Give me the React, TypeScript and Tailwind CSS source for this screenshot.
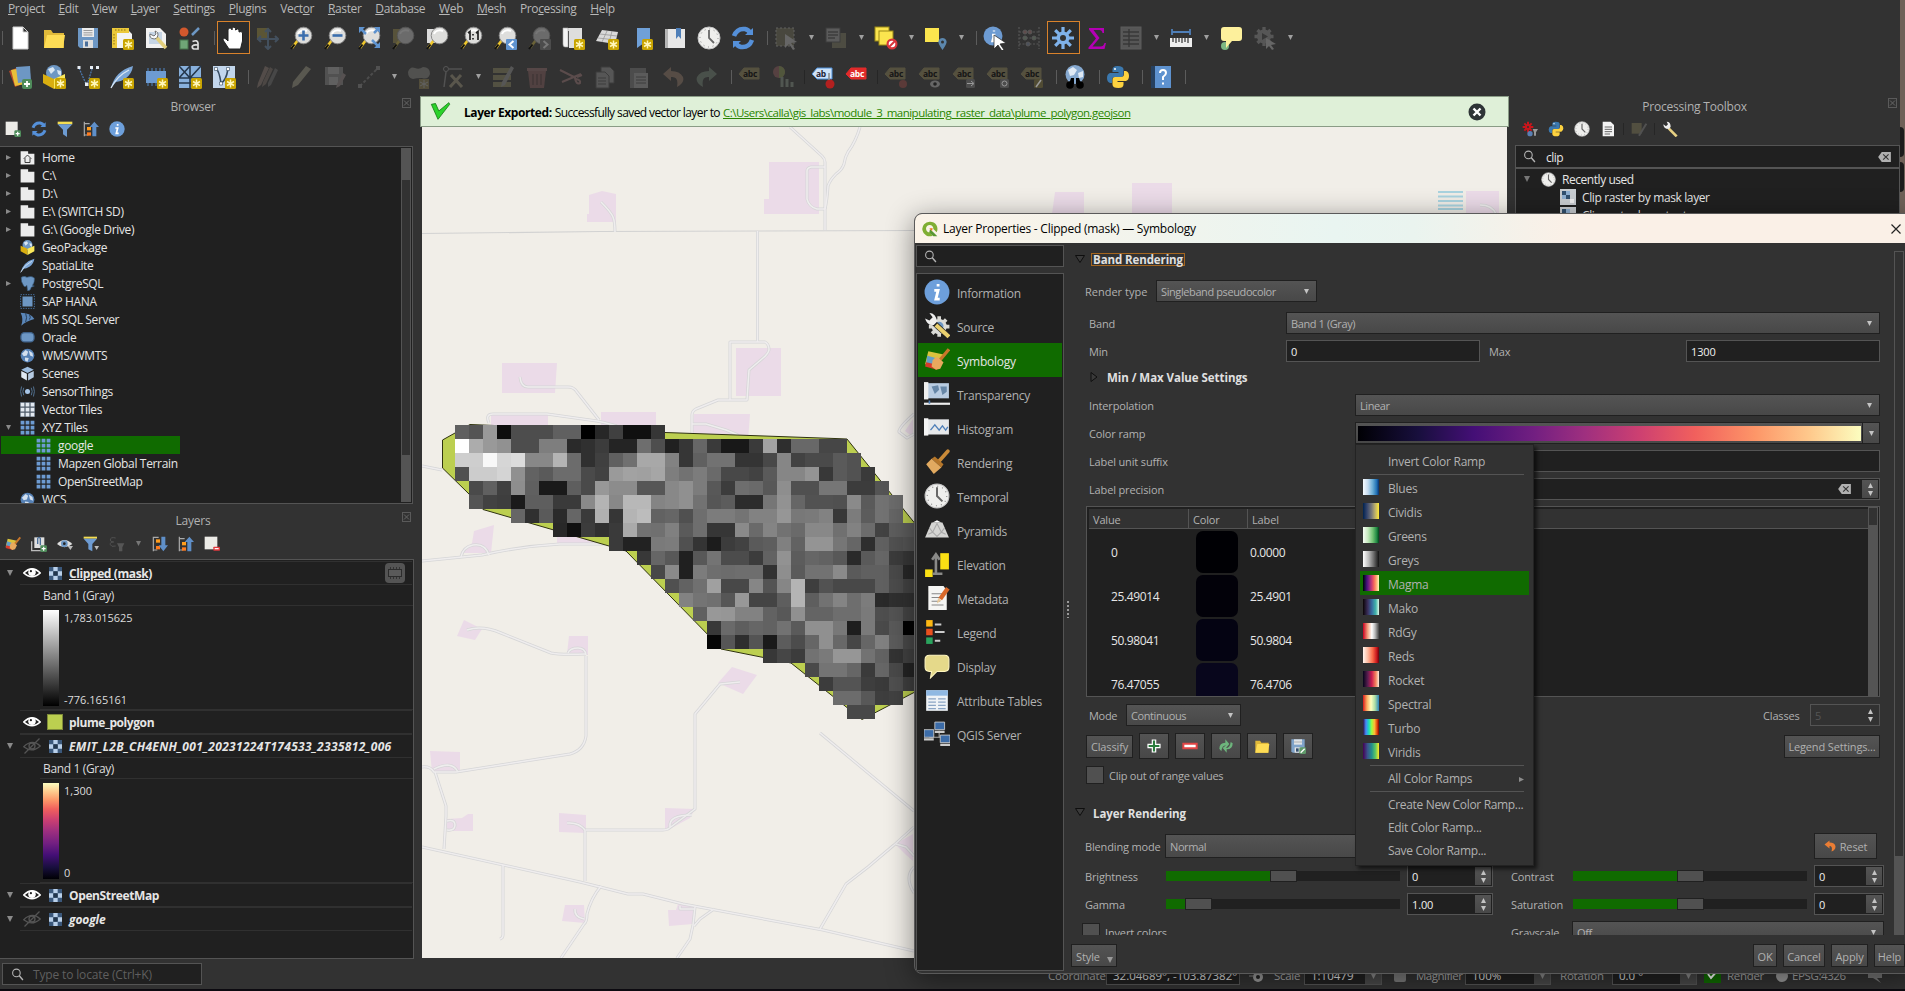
import React from "react";

type Kids = { children?: React.ReactNode };

/* ------------------------------------------------------------------ */
/* Icons                                                               */
/* ------------------------------------------------------------------ */

const Svg = ({ s = 24, children, dim }: { s?: number; dim?: boolean } & Kids) => (
  <svg width={s} height={s} viewBox="0 0 24 24" className={dim ? "block shrink-0 opacity-30" : "block shrink-0"}>
    {children}
  </svg>
);

const Star = () => (
  <g>
    <rect x="13" y="13" width="11" height="11" rx="1.5" fill="#c9a400" />
    <path d="M18.500 14.500v8M15 16.500l7 4M22 16.500l-7 4" stroke="#fff6b8" strokeWidth="1.500" />
  </g>
);
const PlusBadge = () => (
  <g>
    <rect x="14" y="14" width="10" height="10" rx="2" fill="#4f8c5b" />
    <path d="M19 16v6M16 19h6" stroke="#fff" strokeWidth="1.800" />
  </g>
);
const Lens = ({ dark }: { dark?: boolean }) => (
  <g>
    <path d="M9 14L3 22" stroke={dark ? "#6b6338" : "#f0c82c"} strokeWidth="2.600" />
    <path d="M5.500 18.500L2 23" stroke="#111" strokeWidth="2" />
    <circle cx="14.500" cy="9.500" r="8.300" fill={dark ? "#6b6b6b" : "#dededc"} stroke={dark ? "#555" : "#8a8a8a"} />
    <path d="M9 8a6 5 0 0 1 9-3" stroke={dark ? "#777" : "#fff"} strokeWidth="2" fill="none" />
  </g>
);
const Glyph: Record<string, React.ReactNode> = {
  new: <path d="M5 1h10l5 5v17H5z M15 1v5h5" fill="#fff" stroke="#cfcfcf" />,
  open: (
    <g>
      <path d="M2 4h7l2 3h11v15H2z" fill="#e0b93a" />
      <path d="M2 22L5 9h18l-2 13z" fill="#fddc55" />
    </g>
  ),
  save: (
    <g>
      <path d="M2 2h20v20H4l-2-2z" fill="#6d97c4" />
      <path d="M6 2h12v9H6z" fill="#ececec" />
      <path d="M7.500 4.500h9M7.500 6.800h9M7.500 9h9" stroke="#9a9a9a" />
      <path d="M7 14h10v8H7z" fill="#dedede" />
      <path d="M9 15.500h3v5H9z" fill="#4b6f9a" />
    </g>
  ),
  layout: (
    <g>
      <path d="M2 2h14l6 6v14H2z" fill="#f3f3f3" />
      <path d="M2 2h17v5H7v15H2z" fill="#ecc93b" />
      <path d="M5 4h12M4 8v12" stroke="#8c7412" strokeDasharray="1.500 1.500" />
      <Star />
    </g>
  ),
  layoutMgr: (
    <g>
      <path d="M2 2h14l6 6v14H2z" fill="#f1f1f1" />
      <path d="M5 6h13v12H5z" fill="#c6d5e5" />
      <path d="M12 11l10 11" stroke="#e3cf7c" strokeWidth="3.500" />
      <path d="M6 8a4 4 0 1 0 5-3l1 3-2 2z" fill="#fafafa" stroke="#555" strokeWidth=".8" />
    </g>
  ),
  style: (
    <g>
      <circle cx="6" cy="6" r="4.500" fill="#d2582d" />
      <path d="M14 9L21 2" stroke="#6d97c4" strokeWidth="2.500" />
      <rect x="2" y="14" width="8" height="9" fill="#6fa577" stroke="#46724d" />
      <path d="M14.500 15.500q5-2 5.500 1.500v6h-4q-2.500-1-1.500-3 1.500-1.500 5-1" stroke="#ddd" strokeWidth="1.700" fill="none" />
    </g>
  ),
  hand: (
    <path
      d="M8 23l-6-9q0-3 3-1l2 2V4q0-2 2-2t2 2V2.500q2-3 3.500 0V4q2-2 3.500 0v2q2.500-1.500 3.500 1v8l-2 8z"
      fill="#fff"
      stroke="#222"
    />
  ),
  panSel: (
    <g>
      <rect x="2" y="2" width="12" height="12" fill="#b9a83f" />
      <path d="M13 3v20M3 13h20M10 6l3-3 3 3M10 20l3 3 3-3M6 10l-3 3 3 3M20 10l3 3-3 3" stroke="#6d97c4" strokeWidth="2" fill="none" />
    </g>
  ),
  zin: (
    <g>
      <Lens />
      <path d="M14.500 4.500v10M9.500 9.500h10" stroke="#3c6fae" strokeWidth="2.600" />
    </g>
  ),
  zout: (
    <g>
      <Lens />
      <path d="M9.500 9.500h10" stroke="#3c6fae" strokeWidth="2.600" />
    </g>
  ),
  zfull: (
    <g>
      <Lens />
      <path d="M2 1h6L2 7zM23 1h-6l6 6zM23 22h-6l6-6z" fill="#5f93cf" />
      <path d="M3 2l6 6M22 2l-5 5M22 21l-7-7" stroke="#5f93cf" strokeWidth="2.500" />
    </g>
  ),
  zsel: (
    <g>
      <rect x="2" y="3" width="12" height="14" fill="#57523a" />
      <Lens dark />
    </g>
  ),
  zlayer: (
    <g>
      <rect x="2" y="3" width="12" height="14" fill="#dcdcdc" />
      <Lens />
    </g>
  ),
  z11: (
    <g>
      <Lens />
      <path d="M9 7l2-1.500V14M17 7l2-1.500V14M14 8v1.500M14 12v1.500" stroke="#222" strokeWidth="1.700" fill="none" />
    </g>
  ),
  zlast: (
    <g>
      <Lens />
      <rect x="13" y="13" width="11" height="11" rx="1" fill="#5f93cf" />
      <path d="M20.500 15l-4 3.500 4 3.500" stroke="#fff" strokeWidth="2" fill="none" />
    </g>
  ),
  znext: (
    <g>
      <Lens dark />
      <rect x="13" y="13" width="11" height="11" rx="1" fill="#4c4c4c" />
      <path d="M16.500 15l4 3.500-4 3.500" stroke="#777" strokeWidth="2" fill="none" />
    </g>
  ),
  mapview: (
    <g>
      <path d="M4 2h17v20H8V5H4z" fill="#dedede" />
      <path d="M2 2h5v19H4q-2 0-2-3z" fill="#f4f4f4" stroke="#aaa" strokeWidth=".6" />
      <Star />
    </g>
  ),
  view3d: (
    <g>
      <path d="M7 4l16 2-3 12L1 15z" fill="#d9d9d9" />
      <path d="M12 5L7 16M17 5l-3 12M5 8l17 2M3 12l18 2" stroke="#999" strokeWidth=".8" />
      <Star />
    </g>
  ),
  bookmark: (
    <g>
      <path d="M8 2h13v20l-6-5-7 5z" fill="#6fa0d8" />
      <Star />
    </g>
  ),
  book: (
    <g>
      <path d="M2 3h20v19H2z" fill="#e7e7e7" />
      <path d="M2 3h3v19H2z" fill="#b5b5b5" />
      <path d="M13 2h5v11l-2.500-3-2.500 3z" fill="#4f7fb8" />
    </g>
  ),
  clock: (
    <g>
      <circle cx="12" cy="12" r="11" fill="#efefed" stroke="#c4c4c4" />
      <circle cx="12" cy="12" r="9" fill="none" stroke="#888" strokeDasharray="1 3.700" />
      <path d="M12 4v8l5 5" stroke="#666" strokeWidth="1.800" fill="none" />
    </g>
  ),
  refresh: (
    <g fill="none" stroke="#5590d9" strokeWidth="4.500">
      <path d="M3 10q3-8 11-7 4 1 5 4" />
      <path d="M21 14q-3 8-11 7-4-1-5-4" />
      <path d="M14 9h8V2zM10 15H2v7z" fill="#5590d9" stroke="none" />
    </g>
  ),
  select: (
    <g>
      <rect x="2" y="2" width="18" height="18" fill="#7d7a5c" stroke="#ccc" strokeDasharray="2 2" />
      <path d="M11 8l12 8-6 1 4 6-2 1-4-6-4 4z" fill="#ddd" />
    </g>
  ),
  selForm: (
    <g>
      <rect x="8" y="7" width="14" height="15" fill="#8c8868" />
      <rect x="2" y="2" width="14" height="14" fill="#bbb" stroke="#555" />
      <path d="M4 6h10M4 9h10M4 12h7" stroke="#555" strokeWidth="1.500" />
    </g>
  ),
  desel: (
    <g>
      <rect x="1" y="1" width="14" height="14" fill="#fbe54e" stroke="#998717" />
      <rect x="5" y="5" width="14" height="14" fill="#fbe54e" stroke="#998717" />
      <circle cx="18" cy="18" r="5.500" fill="#d8353b" />
      <circle cx="18" cy="18" r="3.300" fill="#fff" />
      <path d="M15 21l6-6" stroke="#d8353b" strokeWidth="2" />
    </g>
  ),
  selLoc: (
    <g>
      <rect x="1" y="2" width="14" height="14" fill="#fbe54e" />
      <path d="M18.500 24q-5-7-4-9 1-3 4-3t4 3q1 2-4 9z" fill="#5c87ad" />
      <circle cx="18.500" cy="16" r="1.500" fill="#333" />
    </g>
  ),
  identify: (
    <g>
      <circle cx="10" cy="10" r="9.500" fill="#6d9bd2" />
      <path d="M11 4.500v1M9 9h2l-1.500 6H12" stroke="#fff" strokeWidth="2.400" fill="none" />
      <path d="M11 9l12 8-6 1 4 6-2 1-4-6-4 4z" fill="#fff" stroke="#222" strokeWidth=".7" />
    </g>
  ),
  abacus: (
    <g stroke="#aaa" fill="#c88">
      <path d="M2 1v22M22 1v22M2 6h20M2 12h20M2 18h20" strokeWidth="1.200" strokeDasharray="2 1.500" />
      <circle cx="8" cy="6" r="2" /><circle cx="13" cy="6" r="2" />
      <circle cx="8" cy="12" r="2" fill="#9b9" /><circle cx="17" cy="12" r="2" fill="#9b9" />
      <circle cx="11" cy="18" r="2" fill="#89b" />
    </g>
  ),
  gear: (
    <g>
      <path d="M12 1v22M1 12h22M4.200 4.200l15.600 15.600M19.800 4.200L4.200 19.800" stroke="#7fb2ea" strokeWidth="3.200" />
      <circle cx="12" cy="12" r="6.500" fill="#7fb2ea" />
      <circle cx="12" cy="12" r="3" fill="#323232" />
    </g>
  ),
  sigma: <path d="M4 2h15v5h-1.500q-.5-3-3-3H8.500l6 8-7 8.500h8q3 0 4-3.500H21l-1.500 6H3.500v-1.500L11 12.500 4 3.500z" fill="#b400b4" />,
  table: (
    <g>
      <rect x="2" y="1" width="20" height="22" fill="#aaa" stroke="#bbb" />
      <path d="M4 6h16M4 10h16M4 14h16M4 18h16M10 3v18" stroke="#444" strokeWidth="1.400" />
    </g>
  ),
  ruler: (
    <g>
      <path d="M3 6h18M3 3v6M21 3v6" stroke="#4f7fb8" strokeWidth="1.800" />
      <rect x="1" y="12" width="22" height="9" fill="#eee" />
      <path d="M4 12v4M7 12v5M10 12v4M13 12v5M16 12v4M19 12v5" stroke="#333" strokeWidth="1.200" />
    </g>
  ),
  tip: (
    <g>
      <circle cx="6" cy="20" r="4" fill="#7db783" />
      <path d="M5 1h15q3 0 3 3v8q0 3-3 3h-7l-6 7V15H5q-3 0-3-3V4q0-3 3-3z" fill="#fdf09c" />
    </g>
  ),
  runAct: (
    <g>
      <path d="M11 1v19M1.500 10.500h19M4.500 4l13 13M17.500 4l-13 13" stroke="#aaa" strokeWidth="3.300" />
      <circle cx="11" cy="10.500" r="7" fill="#aaa" />
      <path d="M9 7l6 3.500-6 3.500z" fill="#444" />
      <path d="M13 12l10 6-5 1 3 4-2 1-3-4-3 3z" fill="#ddd" />
    </g>
  ),
  dsm: (
    <g>
      <path d="M1 6l10-4 6 16-10 4z" fill="#b5482c" />
      <path d="M3 5l11-2 3 16-10 2z" fill="#e8bf39" />
      <path d="M8 2l14-1 1 15-13 2z" fill="#6d97c4" />
      <PlusBadge />
    </g>
  ),
  gpkg: (
    <g>
      <circle cx="12" cy="8" r="8" fill="#6d97c4" />
      <path d="M6 4l5-2 2 3-4 4zM15 5l4 1v5l-3-2z" fill="#d8e6f3" />
      <path d="M1 9l11 5v10L1 18z" fill="#d9ae10" />
      <path d="M23 9l-11 5v10l11-6z" fill="#fae85a" />
    </g>
  ),
  shp: (
    <g>
      <path d="M3 3l7 16M12 17l4-13" stroke="#4f7fb8" strokeWidth="1.200" fill="none" strokeDasharray="2 1" />
      <path d="M1.500 1h3v3h-3zM9 17.500h3.500V21H9zM14 1h3v3h-3zM20 1h3v3h-3z" fill="#e8eef5" />
      <Star />
    </g>
  ),
  feather: (
    <g>
      <path d="M1 23Q5 6 23 1q-1 8-8 13-5 3-9 3z" fill="#7ca6d6" />
      <path d="M1 23Q7 11 19 5" stroke="#dbe8f5" strokeWidth="1.300" fill="none" />
    </g>
  ),
  chip: (
    <g>
      <path d="M4 3v18M8 3v18M12 3v18M16 3v18M20 3v18" stroke="#4b79ad" strokeWidth="1.200" />
      <rect x="2" y="6" width="20" height="12" fill="#6d9bd2" />
    </g>
  ),
  mesh: (
    <g>
      <rect x="1" y="1" width="22" height="22" fill="#88b0dc" />
      <path d="M1 13h22M12 1v22M1 1l11 12M12 1L1 13M12 13L23 1M1 18h22" stroke="#25374c" strokeWidth="1.600" fill="none" />
    </g>
  ),
  virt: (
    <g>
      <rect x="1" y="1" width="22" height="22" fill="#c2d6ec" />
      <path d="M4 4q3 1 5 14 5-2 7-14" stroke="#34495f" strokeWidth="1.600" fill="none" />
      <path d="M2.500 2.500h3v3h-3zM7.500 17h3v3h-3zM14.500 2.500h3v3h-3z" fill="#fff" stroke="#34495f" strokeWidth=".6" />
    </g>
  ),
  pencils: (
    <g>
      <path d="M10 1l4 2L6 20l-4 3 1-5z" fill="#a08a80" />
      <path d="M15 2l3 2-7 15-4 3 1-5z" fill="#8a7a70" />
      <path d="M20 3l3 2-7 15-3 2 0-4z" fill="#777" />
    </g>
  ),
  pencil: <path d="M17 1l5 3L9 20l-6 3 1-6z" fill="#b5b095" />,
  saveEd: (
    <g>
      <path d="M2 2h18v18H2z" fill="#999" />
      <path d="M5 2h11v7H5zM6 12h9v8H6z" fill="#ccc" />
      <path d="M20 8l3 2-6 11-4 2 1-4z" fill="#a99" />
    </g>
  ),
  digi: (
    <g fill="#999">
      <path d="M3 21L21 3" stroke="#888" strokeWidth="2" strokeDasharray="3 2" />
      <rect x="1" y="19" width="4" height="4" /><rect x="19" y="1" width="4" height="4" />
    </g>
  ),
  blob: (
    <g>
      <path d="M1 7q2-6 7-4 4 2 8-1 7 0 7 7-2 6-8 4-6 0-9 1-5-1-5-7z" fill="#9a9a94" />
      <rect x="12" y="14" width="10" height="10" fill="#9c8d50" />
      <path d="M17 15v8M13 17l8 4M21 17l-8 4" stroke="#ccc" />
    </g>
  ),
  vertex: (
    <g>
      <circle cx="5" cy="4" r="2.500" fill="none" stroke="#aaa" />
      <path d="M5 7L3 22M8 4h13" stroke="#999" strokeWidth="1.500" />
      <path d="M9 22l11-12M10 10l11 12" stroke="#b5aa8a" strokeWidth="3" />
    </g>
  ),
  modAttr: (
    <g>
      <path d="M2 3h18v5H2zM2 10h18v5H2zM2 17h18v5H2z" fill="#a09a68" />
      <path d="M20 1l3 2-9 17-4 2 1-5z" fill="#aaa" />
    </g>
  ),
  trash: (
    <g>
      <path d="M3 6h18l-2 17H5z" fill="#966" />
      <path d="M2 3h20v3H2z" fill="#a77" />
      <path d="M8 9v11M12 9v11M16 9v11" stroke="#644" strokeWidth="1.500" />
    </g>
  ),
  cut: <path d="M1 5l16 8M3 17L22 9M17 14q5 1 4 4-4 2-5-5M18 12l5-2" stroke="#b88" strokeWidth="2" fill="none" />,
  copy: (
    <g fill="#aaa" stroke="#555">
      <path d="M8 2h9l4 4v12H8z" /><path d="M3 7h9l4 4v12H3z" />
      <path d="M5 13h8M5 16h8M5 19h8" />
    </g>
  ),
  paste: (
    <g>
      <rect x="3" y="3" width="16" height="20" fill="#888" />
      <rect x="7" y="8" width="14" height="15" fill="#bbb" />
      <path d="M9 12h10M9 15h10M9 18h10" stroke="#555" />
    </g>
  ),
  undo: <path d="M10 2L2 9l8 7v-4q8-1 6 10 8-4 6-10-3-6-12-6z" fill="#a98873" />,
  redo: <path d="M14 2l8 7-8 7v-4q-8-1-6 10-8-4-6-10 3-6 12-6z" fill="#7f9684" />,
  diag: (
    <g>
      <circle cx="7" cy="7" r="6" fill="#a66" /><path d="M7 7V1a6 6 0 0 1 0 12z" fill="#9a5" />
      <path d="M10 22V12M15 22v-8M20 22v-5" stroke="#9a9" strokeWidth="3" />
    </g>
  ),
  search: (
    <g fill="none" stroke="#b4b4b4" strokeWidth="2">
      <circle cx="10" cy="9" r="7" /><path d="M15 14l7 8" strokeWidth="2.600" />
    </g>
  ),
  globeBin: (
    <g>
      <circle cx="12" cy="9.500" r="9.500" fill="#86a9d0" />
      <path d="M5 5l5-3 4 3-3 5-4 1zM15 8l5-2v6l-4 1z" fill="#dfe9f4" />
      <circle cx="7" cy="20" r="3.800" /><circle cx="17" cy="20" r="3.800" /><path d="M8 13h3v6H6zM13 13h3l2 6h-5z" />
    </g>
  ),
  globe: (
    <g>
      <circle cx="12" cy="12" r="11" fill="#5681b5" />
      <path d="M3 9l6-6 4 3-2 6-5 1zM14 4l6 4 1 6-5-2zM8 15l6 1-2 6-4-2z" fill="#d3e0ef" />
    </g>
  ),
  python: (
    <g>
      <path d="M11.500 1q-5 0-5 3.500V7h6v1H4q-3 1-3 5t3 5h2v-3q0-3 3-3h6q2.500 0 2.500-3V4.500Q17.500 1 11.500 1z" fill="#3b78ae" />
      <path d="M12.500 23q5 0 5-3.500V17h-6v-1H20q3-1 3-5t-3-5h-2v3q0 3-3 3H9q-2.500 0-2.500 3v4.500q0 3.500 6 3.500z" fill="#fdd23f" />
      <circle cx="9" cy="4" r="1" fill="#fff" />
    </g>
  ),
  help: (
    <g>
      <rect x="2" y="1" width="20" height="22" fill="#5e92cf" /><rect x="2" y="1" width="4" height="22" fill="#26405f" />
      <path d="M11 8q0-3 3-3t3 3q0 2-3 4v3M14 17.500v2" stroke="#fff" strokeWidth="2" fill="none" />
    </g>
  ),
  folder: <path d="M1 2h12v4h10v17H1z" fill="#ececec" />,
  home: (
    <g>
      <path d="M1 2h12v4h10v17H1z" fill="#ececec" />
      <path d="M6 14l6-6 6 6M8 13v7h8v-7" stroke="#333" strokeWidth="1.500" fill="none" />
    </g>
  ),
  pg: (
    <path d="M2 2q5-3 9 0 7-3 12 1 1 6-3 12l3 1-5 2q-1 6-6 6l-1-9q-3 4-5 1Q1 9 2 2z" fill="#6d97c4" stroke="#32506f" />
  ),
  sap: (
    <g>
      <rect x="1" y="1" width="22" height="22" fill="none" stroke="#4b79ad" strokeWidth="1.500" strokeDasharray="2 2" />
      <rect x="4" y="4" width="16" height="16" fill="#6d97c4" />
    </g>
  ),
  mssql: (
    <g>
      <path d="M1 1q5 10 1 21 8-8 21-11Q17 1 1 1z" fill="#5a86b8" />
      <path d="M9 2q3 7 0 14M15 4q3 5 0 8" stroke="#243a52" strokeWidth="1.500" fill="none" />
    </g>
  ),
  oracle: <rect x="1.500" y="4" width="21" height="15" rx="6" fill="#6d97c4" stroke="#3f628a" strokeWidth="2" />,
  cube: (
    <g>
      <path d="M12 1l10 5-10 5L2 6z" fill="#9dbde0" /><path d="M2 8l9 4.500V23l-9-5z" fill="#dfe8f2" /><path d="M22 8l-9 4.500V23l9-5z" fill="#b6cbe2" />
    </g>
  ),
  sensor: (
    <g fill="none" stroke="#52708f" strokeWidth="1.600">
      <circle cx="12" cy="12" r="4" fill="#a8c6e8" stroke="none" />
      <path d="M6 6q-3 6 0 12M18 6q3 6 0 12M2.500 4q-3 8 0 16M21.500 4q3 8 0 16" />
    </g>
  ),
  tiles: (
    <path d="M1 1h6v6H1zM9 1h6v6H9zM17 1h6v6h-6zM1 9h6v6H1zM9 9h6v6H9zM17 9h6v6h-6zM1 17h6v6H1zM9 17h6v6H9zM17 17h6v6h-6z" fill="#6d9bd2" />
  ),
  vtiles: (
    <g>
      <rect x="0" y="0" width="24" height="24" fill="#4e5a68" />
      <path d="M1 1h6v6H1zM9 1h6v6H9zM17 1h6v6h-6zM1 9h6v6H1zM9 9h6v6H9zM17 9h6v6h-6zM1 17h6v6H1zM9 17h6v6H9zM17 17h6v6h-6z" fill="#e3e9f0" />
    </g>
  ),
  addLayer: (
    <g>
      <rect x="1" y="1" width="18" height="20" fill="#ecebe7" /><PlusBadge />
    </g>
  ),
  filter: (
    <g>
      <path d="M1 1h22v4H1z" fill="#f4dd52" /><path d="M1 5h22l-8 8v11l-6-4v-7z" fill="#6d9bd2" />
    </g>
  ),
  collapse: (
    <g>
      <path d="M2 1v22M2 4h8M2 21h6" stroke="#aaa" strokeWidth="1.800" fill="none" />
      <rect x="6" y="9" width="6" height="5" fill="#ff9d1e" /><rect x="6" y="17" width="6" height="5" fill="#ff7b1e" />
      <path d="M14 23V9h-4l7-8 7 8h-4v14z" fill="#5f8fc8" />
    </g>
  ),
  expand: (
    <g>
      <path d="M2 1v22M2 2h8M2 21h6" stroke="#aaa" strokeWidth="1.800" fill="none" />
      <rect x="6" y="5" width="6" height="5" fill="#ff9d1e" /><rect x="6" y="15" width="6" height="5" fill="#ff7b1e" />
      <path d="M14 1v13h-4l7 9 7-9h-4V1z" fill="#5f8fc8" />
    </g>
  ),
  info: (
    <g>
      <circle cx="12" cy="12" r="11.500" fill="#6d9fdb" />
      <path d="M13 4.500v2.500M9.500 10.500h3.500l-2 8h3.500" stroke="#fff" strokeWidth="2.600" fill="none" />
    </g>
  ),
  brushPal: (
    <g>
      <path d="M4 4l14 3-5 12-12-3z" fill="#d9c33d" /><path d="M3 8l7 2-2 6-6-1z" fill="#62a0c8" /><path d="M2 14l8 2 2 5-11-3z" fill="#d83a2c" />
      <path d="M14 13L23 2" stroke="#c8762a" strokeWidth="3" /><path d="M8 12l4-3 6 5-3 6-4 1-4-3z" fill="#e8a95e" />
    </g>
  ),
  brush: (
    <g>
      <path d="M14 11L22 2" stroke="#c98a38" strokeWidth="3.400" strokeLinecap="round" />
      <path d="M10 7l8 7-2 3-9-8z" fill="#b5762a" /><path d="M7 9l9 8-7 6-7-9z" fill="#e2aa60" />
    </g>
  ),
  addGroup: (
    <g>
      <path d="M1 8v14h14" stroke="#bbb" strokeWidth="2" fill="none" /><rect x="5" y="2" width="15" height="16" fill="#dfdfdf" />
      <path d="M10 12V4q2-4 4 0v10" stroke="#4b6f9a" strokeWidth="2" fill="none" /><PlusBadge />
    </g>
  ),
  eyeTool: (
    <g>
      <path d="M0 12Q11 0 23 12 11 22 0 12z" fill="#ddd" /><circle cx="11" cy="11.500" r="5" fill="#6d97c4" /><circle cx="11" cy="11.500" r="2" fill="#222" /><path d="M16 15h8l-4 6z" fill="#bbb" />
    </g>
  ),
  filterDrop: (
    <g>
      <path d="M1 1h20v3H1z" fill="#f4dd52" /><path d="M1 4h20l-7 8v11l-6-3v-8z" fill="#6d9bd2" /><path d="M17 15h7l-3.500 6z" fill="#bbb" />
    </g>
  ),
  expr: (
    <g>
      <path d="M10 3Q2 1 2 6q0 3 5 3-6 0-5 4 1 4 8 2" stroke="#999" strokeWidth="1.500" fill="none" /><path d="M12 11h11l-3 6v6h-5v-6z" fill="#aaa" />
    </g>
  ),
  remove: (
    <g>
      <rect x="1" y="1" width="19" height="19" fill="#ecebe7" /><rect x="14" y="16" width="10" height="6" rx="1" fill="#e0393e" /><path d="M16 19h6" stroke="#fff" strokeWidth="1.800" />
    </g>
  ),
  rasterI: (
    <g>
      <rect x="0" y="0" width="24" height="24" fill="#3b587b" /><path d="M8 0h8v8H8zM0 8h8v8H0zM16 8h8v8h-8zM8 16h8v8H8z" fill="#b9d0ea" /><path d="M8 8h8v8H8z" fill="#22364d" />
    </g>
  ),
  clipR: (
    <g>
      <rect x="0" y="0" width="24" height="24" fill="#c8ccd0" /><path d="M3 3h6v6H3zM9 9h6v6H9z" fill="#31506f" /><path d="M9 3h6v6H9zM3 9h6v6H3z" fill="#8fb0d2" /><path d="M15 15h6v6h-6z" fill="#eee" />
    </g>
  ),
  eye: (
    <g>
      <path d="M1 12Q12 1 23 12 12 22 1 12z" fill="#222" stroke="#fff" strokeWidth="2.200" />
      <circle cx="12" cy="11" r="5" fill="#fff" /><circle cx="10.500" cy="9.500" r="1.500" fill="#222" />
    </g>
  ),
  eyeOff: (
    <g fill="none" stroke="#555" strokeWidth="1.700">
      <path d="M1 13Q12 2 23 12 12 22 1 13zM2 22L22 2" /><circle cx="12" cy="12" r="4" />
    </g>
  ),
  gears: (
    <g>
      <path d="M9 1v16M1 9h16M3.500 3.500l11 11M14.500 3.500l-11 11" stroke="#c9161c" strokeWidth="3" /><circle cx="9" cy="9" r="4.500" fill="#c9161c" /><circle cx="9" cy="9" r="1.500" fill="#323232" />
      <circle cx="12" cy="19" r="4" fill="#5a7fb3" /><path d="M16 12h8l-3 5v5h-3v-5z" fill="#999" />
    </g>
  ),
  doc: (
    <g>
      <path d="M4 1h12l5 5v17H4z" fill="#f3f3f3" /><path d="M7 9h11M7 12.500h11M7 16h11M7 19.500h8" stroke="#666" strokeWidth="1.500" />
    </g>
  ),
  editIn: (
    <g>
      <rect x="1" y="3" width="15" height="16" fill="#9c9263" /><path d="M23 4L12 22" stroke="#999" strokeWidth="3" />
    </g>
  ),
  wrench: (
    <g>
      <path d="M10 11l12 12" stroke="#e8d183" strokeWidth="4" /><path d="M2 5q0 7 8 7l3-3Q13 1 7 1l2 4-3 3z" fill="#eee" />
    </g>
  ),
  source: (
    <g>
      <path d="M14 3v19M4.500 12.500h19M7.500 6l13 13M20.500 6l-13 13" stroke="#d8d8d4" strokeWidth="3.400" /><circle cx="14" cy="12.500" r="7" fill="#dcdcd8" /><circle cx="14" cy="12" r="4" fill="#6d97c4" />
      <path d="M9 9l14 13" stroke="#222" strokeWidth="5" /><path d="M11 11l12 11" stroke="#ead06e" strokeWidth="3.800" /><path d="M1 5q2 7 8 6l3-3Q11 0 5 0l3 4-3 3z" fill="#eee" />
    </g>
  ),
  transp: (
    <g>
      <rect x="2" y="2" width="21" height="14" fill="#b9cce2" /><rect x="0" y="1" width="4" height="16" fill="#efefef" />
      <path d="M7 5l6-1 1 4-4 4zM15 5h6v5l-4 3z" fill="#6787a8" /><path d="M0 21h24" stroke="#eee" strokeWidth="2" /><path d="M5 18v3" stroke="#4f7fb8" strokeWidth="1.500" />
    </g>
  ),
  histo: (
    <g>
      <rect x="2" y="4" width="21" height="14" fill="#e6e8ea" /><rect x="0" y="3" width="4" height="16" fill="#f4f4f4" /><path d="M6 14l4-5 4 5 3-4 3 4 2-3" stroke="#4f7fb8" strokeWidth="1.200" fill="none" />
    </g>
  ),
  pyr: (
    <g>
      <path d="M7 5h10l6 14H1z" fill="#d5d5d3" /><path d="M5 10l3 4 4-8 4 8 3-4M4 16l4-2 4 4 4-4 4 2" stroke="#aaa" fill="none" /><path d="M8 5l4-2 4 2z" fill="#fff" />
    </g>
  ),
  elev: (
    <g>
      <rect x="15" y="2" width="8" height="15" fill="#fbe014" /><rect x="1" y="17" width="7" height="7" fill="#fbe014" /><path d="M11 21V5M7.500 8L11 3l3.500 5M8 21h9" stroke="#8a8a88" strokeWidth="2.400" fill="none" />
    </g>
  ),
  meta: (
    <g>
      <path d="M4 1h14l3 4v18H4z" fill="#f5f5f3" /><path d="M7 8h10M7 11.500h10M7 15h8M7 18.500h11" stroke="#888" /><path d="M22 3L15 13" stroke="#d8682a" strokeWidth="4" /><path d="M13 12l3 2-4 3z" fill="#e8c898" />
    </g>
  ),
  legend: (
    <g>
      <rect x="2" y="1" width="6" height="6" fill="#fdb813" /><rect x="2" y="9" width="6" height="6" fill="#e8501e" /><rect x="2" y="17" width="6" height="6" fill="#2aa45e" /><path d="M10 5h6M10 12h9M10 20h5" stroke="#ccc" strokeWidth="1.800" />
    </g>
  ),
  display: <path d="M5 2h14q4 0 4 4v7q0 4-4 4h-7l-6 6 1-6H5q-4 0-4-4V6q0-4 4-4z" fill="#e5d98a" stroke="#fff6c0" />,
  attr: (
    <g>
      <rect x="2" y="3" width="20" height="19" fill="#eef2f6" /><rect x="2" y="3" width="20" height="5" fill="#8fb8e2" /><path d="M4 11h7M13 11h7M4 14h7M13 14h7M4 17h7M13 17h7M4 20h7M13 20h7" stroke="#89a4c4" strokeWidth="1.300" />
    </g>
  ),
  server: (
    <g>
      <path d="M14 9v6M5 15h14" stroke="#aaa" />
      <path d="M10 1h9v7h-9zM0 8h9v7H0zM15 13h9v7h-9z" fill="#3c6ca8" stroke="#ccc" strokeWidth=".8" />
      <path d="M10 9h9v2h-9zM0 16h9v2H0zM15 21h9v2h-9z" fill="#ccc" />
    </g>
  ),
  plus: <path d="M9.500 3h5v6.500H21v5h-6.500V21h-5v-6.500H3v-5h6.500z" fill="#2b7d3d" stroke="#fff" strokeWidth="1.800" />,
  minus: <path d="M2 8.500h20v7H2z" fill="#fff" stroke="#e04545" strokeWidth="3" />,
  swap: <path d="M2 16q0-9 9-9V2l6 7-5 6v-4q-6 0-7 9zM22 8q0 9-9 9v5l-6-7 5-4v4q6 0 7-9z" fill="#6db57c" />,
  saveStyle: (
    <g>
      <path d="M2 2h20v20H4l-2-2z" fill="#7fa3c9" /><path d="M6 2h12v8H6z" fill="#dfe3e6" /><path d="M6 6h12" stroke="#999" />
      <path d="M7 14h10v8H7z" fill="#e6e6e6" /><path d="M9 15.500h4v5H9z" fill="#33506f" />
      <rect x="14" y="14" width="10" height="10" rx="2" fill="#5f9a6a" /><path d="M16 22l6-6" stroke="#fff" strokeWidth="2" />
    </g>
  ),
  reset: <path d="M11 1L1 9l10 8v-5q7 0 4 11 8-3 8-10-1-8-12-8z" fill="#ea7d34" />,
};

const Abc = ({ v, badge }: { v: string; badge?: React.ReactNode }) => {
  const c = v === "red" ? ["#e12a2a", "#fff"] : v === "blue" ? ["#cfe3f8", "#223"] : ["#55513f", "#161616"];
  return (
    <svg width="26" height="24" viewBox="0 0 26 24" className="block shrink-0">
      <path d="M2 9l5-6h15v11H7z" fill={c[0]} stroke={v === "blue" ? "#4d8fd9" : c[0]} />
      <text x="6" y="12" fill={c[1]} className="font-['Open_Sans'] text-[8.500px] font-bold tracking-[-0.3px]">{v === "blue" ? "ab" : "abc"}</text>
      {badge}
    </svg>
  );
};

const Icon = ({ n, s = 16, dim }: { n: string; s?: number; dim?: boolean }) => (
  <Svg s={s} dim={dim}>{Glyph[n]}</Svg>
);

const Tri = ({ d = "down", c = "#8c8c8c", s = 7 }: { d?: string; c?: string; s?: number }) => (
  <svg width={s} height={s} viewBox="0 0 8 8" className="block shrink-0">
    <path d={d === "down" ? "M0 0h8L4 8z" : d === "up" ? "M0 8h8L4 0z" : "M0 0v8l8-4z"} fill={c} />
  </svg>
);

/* ------------------------------------------------------------------ */
/* Menu bar and toolbars                                               */
/* ------------------------------------------------------------------ */

const MENUS: [string, string, string][] = [
  ["", "P", "roject"], ["", "E", "dit"], ["", "V", "iew"], ["", "L", "ayer"], ["", "S", "ettings"], ["", "P", "lugins"],
  ["Vect", "o", "r"], ["", "R", "aster"], ["", "D", "atabase"], ["", "W", "eb"], ["", "M", "esh"], ["Pro", "c", "essing"], ["", "H", "elp"],
];

const Slot = ({ children, on }: { on?: boolean } & Kids) => (
  <div className="flex h-[33px] w-[34px] shrink-0 items-center justify-center">
    <div className={on ? "flex h-[33px] w-[33px] items-center justify-center border border-[#d9822b] bg-[#2d2d2d]" : ""}>{children}</div>
  </div>
);
const Sep = () => <div className="mr-px ml-[7px] h-[14px] w-px shrink-0 bg-[#5c5c5c]" />;
const DSep = () => <div className="mr-px ml-[3px] h-[14px] w-px shrink-0 bg-[#262626]" />;
const Drop = ({ c }: { c?: string }) => (
  <div className="flex w-4 shrink-0 justify-center"><Tri s={5} c={c || "#a0a0a0"} /></div>
);

const ROW1 = "new open save layout layoutMgr style | hand! panSel- zin zout zfull zsel zlayer z11 zlast znext mapview view3d bookmark book clock refresh | select- v selForm- v desel v selLoc v | identify abacus- gear! sigma table- v ruler v tip runAct- v".split(" ");

const badge = (c: string) => <rect x="15" y="14" width="9" height="9" rx="1.500" fill={c} />;
const TOK: Record<string, React.ReactNode> = {
  pin: <Abc v="dim" />,
  blue: <Abc v="blue" badge={<g><circle cx="20" cy="19" r="4.500" fill="#b3201f" /><path d="M19 8v7" stroke="#888" strokeWidth="1.500" /></g>} />,
  red: <Abc v="red" />,
  a1: <Abc v="dim" badge={<circle cx="20" cy="19" r="4" fill="#5b3a38" />} />,
  a2: <Abc v="dim" badge={<g><ellipse cx="18" cy="19" rx="5" ry="3.500" fill="#666" /><circle cx="18" cy="19" r="1.800" fill="#222" /></g>} />,
  a3: <Abc v="dim" badge={<g>{badge("#4c4c4c")}<path d="M16 18.500h6M20 16l3 2.500-3 2.500" stroke="#999" fill="none" /></g>} />,
  a4: <Abc v="dim" badge={<g>{badge("#4c4c4c")}<circle cx="19.500" cy="18.500" r="2.500" stroke="#999" fill="none" /></g>} />,
  a5: <Abc v="dim" badge={<g>{badge("#504b33")}<path d="M17 22l5-7" stroke="#999" strokeWidth="1.500" /></g>} />,
};
const ROW2 = "dsm gpkg+ shp feather+ chip+ mesh+ virt+ | pencils- pencil- saveEd- digi- v blob- vertex- v modAttr- trash- cut- copy- paste- undo- redo- | pin diag- : blue red : a1 a2 a3 a4 a5 | globeBin | python | help |".split(" ");

const Tools = ({ row }: { row: string[] }) => (
  <>
    {row.map((t, i) => {
      if (t === "|") return <Sep key={i} />;
      if (t === ":") return <DSep key={i} />;
      if (t === "v") return <Drop key={i} />;
      if (TOK[t]) return <Slot key={i}>{TOK[t]}</Slot>;
      const name = t.replace(/[-!+]$/, "");
      return (
        <Slot key={i} on={t.endsWith("!")}>
          <Svg dim={t.endsWith("-")} s={24}>{Glyph[name]}{t.endsWith("+") && <Star />}</Svg>
        </Slot>
      );
    })}
  </>
);

const CloseBox = () => (
  <svg width="9" height="10" viewBox="0 0 9 10" className="block">
    <rect x=".5" y=".5" width="8" height="9" fill="none" stroke="#5a5a5a" /><path d="M2 2.500l5 5M7 2.500l-5 5" stroke="#666" />
  </svg>
);
const DockTitle = ({ t, h, pad }: { t: string; h: string; pad: string }) => (
  <div className={`flex items-center ${h}`}>
    <div className={`flex-1 pt-[2px] text-center text-[12px] tracking-[-0.2px] text-[#b1b1b1] ${pad}`}>{t}</div>
    <div className="mr-[3px] mb-1.5 w-[9px]"><CloseBox /></div>
  </div>
);
const Small = ({ n, dim }: { n: string; dim?: boolean }) => (
  <div className="flex w-[26px] shrink-0 justify-center"><Icon n={n} dim={dim} /></div>
);

/* ------------------------------------------------------------------ */
/* Browser and layers docks                                            */
/* ------------------------------------------------------------------ */

const BROWSER: [string, string, string][] = [
  ["right", "home", "Home"], ["right", "folder", "C:\\"], ["right", "folder", "D:\\"], ["right", "folder", "E:\\ (SWITCH SD)"],
  ["right", "folder", "G:\\ (Google Drive)"], ["", "gpkg", "GeoPackage"], ["", "feather", "SpatiaLite"], ["right", "pg", "PostgreSQL"],
  ["", "sap", "SAP HANA"], ["", "mssql", "MS SQL Server"], ["", "oracle", "Oracle"], ["", "globe", "WMS/WMTS"], ["", "cube", "Scenes"],
  ["", "sensor", "SensorThings"], ["", "vtiles", "Vector Tiles"], ["down", "tiles", "XYZ Tiles"],
  ["sub", "tiles", "google"], ["sub", "tiles", "Mapzen Global Terrain"], ["sub", "tiles", "OpenStreetMap"], ["", "globe", "WCS"],
];

const Browser = () => (
  <div className="flex h-[408px] flex-col">
    <DockTitle t="Browser" h="h-[20px]" pad="pr-[16px]" />
    <div className="flex h-[30px] items-center pb-[4px]">
      <Small n="addLayer" /><Small n="refresh" /><Small n="filter" /><Small n="collapse" /><Small n="info" />
    </div>
    <div className="flex h-[358px] w-[413px] overflow-hidden border border-l-0 border-[#545454] bg-[#202020] pt-px">
      <div className="w-[401px]">
        {BROWSER.map(([a, ic, t], i) => (
          <div key={i} className="flex h-[18px] items-center">
            <div className={t === "google" ? "ml-px flex h-[18px] w-[179px] items-center bg-[#106b00]" : "ml-px flex h-[18px] items-center"}>
              <div className={a === "sub" ? "w-[35px]" : "w-[19px] pl-[5px]"}>{(a === "right" || a === "down") && <Tri d={a} s={5} c="#8a8a8a" />}</div>
              <Icon n={ic} s={15} />
              <span className="ml-[7px] pt-[2px] text-[12px] tracking-[-0.35px] whitespace-nowrap text-[#e6e6e6]">{t}</span>
            </div>
          </div>
        ))}
      </div>
      <div className="h-[354px] w-[10px] bg-[#545454] pt-[31px]">
        <div className="h-[277px] border border-[#545454] bg-[#323232]" />
      </div>
    </div>
  </div>
);

const LayerRow = ({ t, on, icon = "rasterI", arrow = true, cls = "", chip }: { t: string; on?: boolean; icon?: string; arrow?: boolean; cls?: string; chip?: boolean }) => (
  <div className="flex h-[24px]">
    <div className="flex w-[20px] items-center pl-[7px]">{arrow && <Tri s={6} c="#8a8a8a" />}</div>
    <div className="flex w-[392px] items-center border-t border-b border-[#303030] pl-[3px]">
      <Icon n={on ? "eye" : "eyeOff"} s={18} />
      <div className="ml-[6px] flex w-4 justify-center">
        {icon ? <Icon n={icon} s={13} /> : <div className="h-4 w-4 shrink-0 border border-[#7f8b3a] bg-[#bccf50]" />}
      </div>
      <span className={`ml-[6px] flex-1 pt-[2px] text-[12px] font-bold whitespace-nowrap text-[#e6e6e6] ${cls}`}>{t}</span>
      {chip && (
        <div className="mr-[7px] flex h-[20px] w-[20px] items-center justify-center rounded-sm bg-[#545454]">
          <svg width="14" height="12" viewBox="0 0 14 12"><path d="M2.500 0v12M5.500 0v12M8.500 0v12M11.500 0v12" stroke="#333" /><rect x=".5" y="2.500" width="13" height="7" fill="#5a5a5a" stroke="#2c2c2c" /></svg>
        </div>
      )}
    </div>
  </div>
);
const Legend = ({ hi, lo, ramp }: { hi: string; lo: string; ramp: string }) => (
  <>
    <div className="ml-[40px] flex h-[21px] items-center border-b border-[#303030] pt-[2px] pl-[3px] text-[12px] tracking-[-0.35px] text-[#dcdcdc]">Band 1 (Gray)</div>
    <div className="ml-[40px] flex h-[104px] border-b border-[#303030] pt-[4px] pl-[3px]">
      <div className={`h-[96px] w-[16px] ${ramp}`} />
      <div className="flex h-[97px] flex-col justify-between pt-px pl-[5px] text-[11px] leading-[14px] text-[#dcdcdc]"><span>{hi}</span><span>{lo}</span></div>
    </div>
  </>
);
const MAGMA_V = "bg-[linear-gradient(0deg,#000004,#180f3d_12%,#440f76_25%,#721f81_37%,#9e2f7f_50%,#cd4071_62%,#f1605d_73%,#fd9668_82%,#feca8d_91%,#fcfdbf)]";
const MAGMA_H = "bg-[linear-gradient(90deg,#000004,#180f3d_12%,#440f76_23%,#721f81_35%,#9e2f7f_45%,#cd4071_56%,#f1605d_67%,#fd9668_79%,#feca8d_90%,#fcfdbf)]";

const Layers = () => (
  <div className="flex h-[455px] flex-col">
    <DockTitle t="Layers" h="h-[28px] pt-[3px]" pad="pr-[16px]" />
    <div className="flex h-[27px] items-center pb-[4px]">
      <Small n="brushPal" /><Small n="addGroup" /><Small n="eyeTool" /><Small n="filterDrop" /><Small n="expr" dim />
      <div className="flex w-[17px] justify-center"><Tri s={5} c="#777" /></div>
      <Small n="expand" /><Small n="collapse" /><Small n="remove" />
    </div>
    <div className="h-[400px] w-[414px] border border-l-0 border-[#545454] bg-[#202020] pt-px">
      <LayerRow t="Clipped (mask)" on cls="underline tracking-[-0.4px]" chip />
      <Legend hi="1,783.015625" lo="-776.165161" ramp="bg-[linear-gradient(#fff,#000)]" />
      <LayerRow t="plume_polygon" on icon="" arrow={false} cls="tracking-[-0.42px]" />
      <LayerRow t="EMIT_L2B_CH4ENH_001_20231224T174533_2335812_006" cls="italic tracking-[0.32px]" />
      <Legend hi="1,300" lo="0" ramp={MAGMA_V} />
      <LayerRow t="OpenStreetMap" on cls="tracking-[-0.38px]" />
      <LayerRow t="google" cls="italic tracking-[-0.1px]" />
    </div>
  </div>
);

/* ------------------------------------------------------------------ */
/* Map canvas                                                          */
/* ------------------------------------------------------------------ */

/* First column index of each raster row, then two hex digits of grey per cell. */
const RASTER: [number, string][] = [
  [0, "6054990e4d4d4d606000274010 1036"],
  [0, "ffac99914d4d7e7e2a303c24246e4e2036663a18183aa22e68684646"],
  [0, "cecef8d6dc8888b46c30406070a8a88236607272343448 86424a4a5a52"],
  [0, "50ccccd490625a6c6c4a429aa2a0a67e727c6a4848425a86869438 5a523a"],
  [1, "4a60408e601a1a5e4a988c8c565688907c583c6e6a588e505076763c3c54"],
  [1, "54423e1a5e5e3a3a8ab488b8b884889072565c2c2c7692665252 508a5a726c"],
  [4, "66305a2a663ab036b4bc6266506e7c7c748282967 87a82387c5c7266"],
  [7, "28103c303aaa7270805a6e36368a6a84726a888870826c425e5e"],
  [11, "3a22227a7c50341c3c425a5e806294947666 2e605256"],
  [13, "3866582058744c4c3c62925c6662582a5a663c38"],
  [14, "488a207c6e6c6e6e328e5a72728a5a60604a28"],
  [15, "506270a048488654 86b43e524848486 04c44"],
  [16, "827470569844445eb45e72846e7c2a3032"],
  [17, "6098968282625890 64646e6e7a4e5446"],
  [18, "386a5e6662725a9090781e7a4a5a02"],
  [18, "06562e541a5c4c6690684666805c4a"],
  [22, "38463c727a969672623442"],
  [25, "4a7474663a664a24"],
  [26, "3c54543e3a5040"],
  [27, "6c6c583e42"],
  [28, "4848"],
];

const CELLS = RASTER.flatMap(([start, raw], r) => {
  const s = raw.replace(/ /g, "");
  return Array.from({ length: s.length / 2 }, (_, i) => {
    const g = s.slice(i * 2, i * 2 + 2);
    return { x: 455 + (start + i) * 14, y: 424 + r * 14, c: `#${g}${g}${g}` };
  });
});

const PADS = [
  "589,194 602,190 616,193 616,221 587,221 587,213 589,213", "769,161 819,161 819,213 764,213 764,198 769,198",
  "736,347 781,347 781,395 736,395", "502,362 557,362 555,392 502,392", "491,414 548,414 548,430 491,430",
  "601,411 656,411 656,435 601,435", "694,413 750,413 748,440 692,440", "474,530 494,524 491,552 463,552 472,542",
  "557,536 605,536 605,543 557,542", "464,619 482,628 475,639 457,635", "569,635 588,635 588,654 567,653",
  "732,666 757,674 743,693 718,682", "430,750 460,751 460,771 432,771", "447,818 462,817 468,813 473,813 473,830 447,830",
  "559,812 586,814 586,832 559,831", "665,807 695,808 690,817 668,829 665,829", "565,904 584,904 585,922 562,920",
  "668,909 676,909 678,903 695,905 693,923 669,925", "895,843 913,833 913,860 905,853", "905,430 913,418 913,436",
  "1055,191 1084,191 1084,213 1052,213", "1132,182 1172,182 1172,213 1132,213", "1466,190 1499,190 1499,213 1466,213",
];
const ROADS = [
  "M601 201q10 10 12 15 2 5 2 15", "M790 126L822 155q3 3 3 6V229",
  "M860 126q-4 14-12 25-3 5-4 12-2 6-8 10-6 6-8 12-1 15-3 23", "M825 166h-14q-4 1-4 4v28q2 8 10 10h8", "M757.500 230V341",
  "M730 399V341h35q4 2 4 8-1 4-6 8l-14 12-2 30h-29l-22 9q-4 2-4 6v18", "M692 423h14l20 6 12 5",
  "M520 376q1 10 8 10h40q6 0 9 5l22 28", "M489 422q-4-9 4-9h54l50 7q6 1 20 5", "M422 465l20 4",
  "M422 560l60-6q40-9 78-11h45", "M461 556q2-10 12-12 12-2 16 10", "M467 629q15-5 34 3l50 20q8 2 35 1", "M568 652q2-5 10-5 7 0 8 7",
  "M586 655v80q-2 14-16 18L456 771H434q-4-6-12-5", "M434 768q18-9 24 3", "M435 771l11 34v10l-2 33", "M447 820q8-2 8 4t-8 5",
  "M740 681l-20 2-25 30V808L668 828q-2 1-5 1H586", "M567 822q12-1 18 7V880", "M670 826q-2-12 22-12",
  "M422 846L580 881l48 12h15l40 10 140 26 91 21", "M503 864v70q0 3-3 4", "M601 885q-10 12-14 28 0 8-3 10L561 957", "M575 908q-1 8 9 10",
  "M695 906l-2 18-3 14-13 19", "M714 908l-14 10-6 7", "M680 905v3h14", "M820 732L914 810", "M820 928l26-45 22-17 26-22 20-18",
  "M914 413q-16 14-15 18l8 6 7-4", "M896 843l10 3 8 9M914 866q-10 10 0 26", "M1480 204q12 0 16 9",
];

const MapCanvas = () => (
  <svg width="1085" height="831" viewBox="422 126 1085 831" className="ml-[2px] block">
    <rect x="422" y="126" width="1085" height="831" fill="#f1eee8" />
    <g fill="#ebdbe8">{PADS.map((p) => <polygon key={p} points={p} />)}</g>
    <path d="M1438 191h25M1438 195.500h25M1438 200h25M1438 204.500h25M1438 208h25" stroke="#a9d3df" strokeWidth="2" />
    <g fill="none" strokeLinejoin="round">
      <path d="M422 232.500L600 230.500L914 229.500L1507 226" stroke="#d2d2d2" strokeWidth="1.200" />
      <g stroke="#d6d6d7" strokeWidth="3">{ROADS.map((d) => <path key={d} d={d} />)}</g>
      <g stroke="#efedee" strokeWidth="1.500">{ROADS.map((d) => <path key={d} d={d} />)}</g>
    </g>
    <polygon
      points="442.500,439 455,432 470,423.500 665,431.500 835,437.500 847,438 925,535 925,686 913,692 862,718.500 791,662 721,648 717,643 626,550 609,545 483,508.500 469,493 442.500,467"
      fill="#bccf50" stroke="#2f3210"
    />
    <g shapeRendering="crispEdges">{CELLS.map((c) => <rect key={`${c.x}-${c.y}`} x={c.x} y={c.y} width="14" height="14" fill={c.c} />)}</g>
  </svg>
);

const MessageBar = () => (
  <div className="flex h-[31px] w-[1089px] items-center border border-[#8a9c86] bg-[#dff0d8] text-[12px] text-black">
    <svg width="21" height="20" viewBox="0 0 24 24" className="mb-0.5 ml-[9px]"><path d="M1 4l5-1 4 9L22 2l1 2L9 22z" fill="#2bd32b" stroke="#147a14" /></svg>
    <span className="ml-[13px] pt-[2px] font-bold tracking-[-0.42px] whitespace-nowrap">Layer Exported:</span>
    <span className="ml-[3px] pt-[2px] tracking-[-0.6px] whitespace-nowrap">Successfully saved vector layer to</span>
    <span className="ml-[3px] flex-1 pt-[2px] text-[11.500px] tracking-[-0.52px] whitespace-nowrap text-[#2a8500] underline">C:\Users\calla\gis_labs\module_3_manipulating_raster_data\plume_polygon.geojson</span>
    <svg width="18" height="18" viewBox="0 0 18 18" className="mr-[22px]"><circle cx="9" cy="9" r="8.500" fill="#2e3436" /><path d="M5.500 5.500l7 7M12.500 5.500l-7 7" stroke="#fff" strokeWidth="2.400" /></svg>
  </div>
);

const ClearIcon = () => (
  <svg width="13" height="10" viewBox="0 0 14 11" className="block shrink-0"><path d="M4 0h10v11H4L0 5.500z" fill="#b0b0b0" /><path d="M5.500 2.500l6 6M11.500 2.500l-6 6" stroke="#333" strokeWidth="1.200" /></svg>
);

const Toolbox = () => (
  <div className="ml-[6px] flex w-[385px] flex-col text-[12px]">
    <DockTitle t="Processing Toolbox" h="h-[20px]" pad="pr-[14px]" />
    <div className="flex h-[29px] items-center pb-[3px] pl-[2px]">
      <Small n="gears" /><Small n="python" /><Small n="clock" /><Small n="doc" />
      <div className="mx-[2px] h-3 w-px bg-[#262626]" /><Small n="editIn" dim /><div className="mx-[2px] h-3 w-px bg-[#262626]" /><Small n="wrench" />
    </div>
    <div className="flex h-[23px] items-center border border-[#545454] bg-[#202020] pr-[8px] pl-[7px]">
      <Icon n="search" s={13} />
      <span className="ml-[10px] flex-1 pt-[2px] tracking-[-0.5px] text-[#e6e6e6]">clip</span>
      <ClearIcon />
    </div>
    <div className="h-[200px] border border-[#545454] bg-[#202020] pt-px text-[#e6e6e6]">
      <div className="flex h-[18px] items-center pl-[8px]"><Tri s={6} c="#777" /><div className="ml-[11px]"><Icon n="clock" s={15} /></div><span className="ml-[6px] pt-px tracking-[-0.45px]">Recently used</span></div>
      {["Clip raster by mask layer", "Clip raster by extent"].map((t) => (
        <div key={t} className="flex h-[18px] items-center pl-[44px]"><Icon n="clipR" s={16} /><span className="ml-[6px] pt-px tracking-[-0.38px]">{t}</span></div>
      ))}
    </div>
  </div>
);

/* ------------------------------------------------------------------ */
/* Status bar                                                          */
/* ------------------------------------------------------------------ */

const SField = ({ t, w, drop }: { t: string; w: string; drop?: boolean }) => (
  <div className={`flex h-[22px] shrink-0 items-center border border-[#545454] bg-[#202020] pl-[6px] text-[#e0e0e0] ${w}`}>
    <span className="flex-1 pt-[3px] whitespace-nowrap">{t}</span>
    {drop && <div className="flex h-5 w-4 items-center justify-center bg-[#484848] pt-[4px]"><Tri s={5} /></div>}
  </div>
);
const StatusBar = () => (
  <div className="flex h-[30px] items-center text-[11.500px] text-[#a8a8a8]">
    <div className="ml-[2px] flex h-[22px] w-[200px] items-center border border-[#545454] bg-[#202020] pl-[8px] text-[12px] tracking-[-0.15px] text-[#5f5f5f]">
      <Icon n="search" s={13} /><span className="ml-[9px] pt-[2px]">Type to locate (Ctrl+K)</span>
    </div>
    <span className="ml-[846px] w-[58px] pt-[4px] tracking-[-0.2px] whitespace-nowrap">Coordinate</span>
    <SField t="32.04689°, -103.87382°" w="w-[134px]" />
    <div className="flex w-[34px] justify-center pt-[4px]"><svg width="16" height="14" viewBox="0 0 16 14"><circle cx="9" cy="8" r="5" fill="#999" /><circle cx="9" cy="8" r="2" fill="#222" /><path d="M0 7h5" stroke="#888" /></svg></div>
    <span className="w-[30px] pt-[4px] tracking-[-0.3px]">Scale</span>
    <SField t="1:10479" w="w-[78px]" drop />
    <div className="mt-[5px] ml-[12px] h-[10px] w-[12px] rounded-[2px] bg-[#7a7a7a]" />
    <span className="ml-[10px] w-[49px] pt-[4px] tracking-[-0.5px]">Magnifier</span>
    <SField t="100%" w="w-[86px]" drop />
    <span className="ml-[9px] w-[52px] pt-[4px] tracking-[-0.2px]">Rotation</span>
    <SField t="0.0 °" w="w-[85px]" drop />
    <div className="ml-[7px] flex h-[17px] w-[17px] items-center justify-center bg-[#106b00]"><svg width="11" height="11" viewBox="0 0 11 11"><path d="M1 5l3 4 6-7" stroke="#fff" strokeWidth="2" fill="none" /></svg></div>
    <span className="ml-[6px] w-[49px] pt-[4px] tracking-[-0.3px]">Render</span>
    <div className="mt-[3px] h-3 w-3 shrink-0 rounded-full bg-[#9a9a9a]" />
    <span className="ml-[4px] w-[76px] pt-[4px] tracking-[-0.4px]">EPSG:4326</span>
    <svg width="14" height="13" viewBox="0 0 14 13" className="mt-[4px]"><path d="M2 0h10l2 2v6H9l4 5-8-5H0V2z" fill="#777" /></svg>
  </div>
);

/* ------------------------------------------------------------------ */
/* Layer properties dialog                                             */
/* ------------------------------------------------------------------ */

const PAGES: [string, string][] = [
  ["info", "Information"], ["source", "Source"], ["brushPal", "Symbology"], ["transp", "Transparency"], ["histo", "Histogram"],
  ["brush", "Rendering"], ["clock", "Temporal"], ["pyr", "Pyramids"], ["elev", "Elevation"], ["meta", "Metadata"],
  ["legend", "Legend"], ["display", "Display"], ["attr", "Attribute Tables"], ["server", "QGIS Server"],
];

const RAISED = "border border-[#202020] bg-[linear-gradient(#545454,#484848)] text-[#b1b1b1]";
const Combo = ({ t, w, h = "h-[22px]" }: { t: string; w: string; h?: string }) => (
  <div className={`flex shrink-0 items-center pr-[7px] pl-[4px] ${RAISED} ${h} ${w}`}><span className="flex-1 tracking-[-0.4px] whitespace-nowrap">{t}</span><Tri s={5} c="#c4c4c4" /></div>
);
const Btn = ({ t, w, h = "h-[23px]", children }: { t?: string; w: string; h?: string } & Kids) => (
  <div className={`flex shrink-0 items-center justify-center whitespace-nowrap ${RAISED} ${h} ${w}`}>{children}{t && <span>{t}</span>}</div>
);
const Field = ({ t = "", w, children }: { t?: string; w: string } & Kids) => (
  <div className={`flex h-[22px] shrink-0 items-center border border-[#545454] bg-[#202020] pl-[4px] text-[#f0f0f0] ${w}`}><span className="flex-1">{t}</span>{children}</div>
);
const Spin = ({ flat }: { flat?: boolean }) => (
  <div className={flat ? "mr-px flex h-[18px] w-[16px] flex-col items-center justify-center gap-[3px]" : "mr-px flex h-[18px] w-[16px] flex-col items-center justify-center gap-[3px] bg-[linear-gradient(#545454,#484848)]"}>
    <Tri s={5} d="up" c="#c4c4c4" /><Tri s={5} c="#c4c4c4" />
  </div>
);
const Slider = ({ fill, len }: { fill: string; len: string }) => (
  <div className={`flex h-[12px] shrink-0 items-center ${len}`}>
    <div className={`h-[10px] bg-[#106b00] ${fill}`} /><div className="h-[12px] w-[27px] border border-[#202020] bg-[#505050]" /><div className="h-[10px] flex-1 bg-[#202020]" />
  </div>
);
const Check = () => <div className="h-[18px] w-[18px] shrink-0 border border-[#202020] bg-[#505050]" />;
const Title = ({ t, cls = "", open = true }: { t: string; cls?: string; open?: boolean }) => (
  <>
    <svg width="12" height="12" viewBox="0 0 12 12" className="shrink-0"><path d={open ? "M1.500 2.500h9l-4.500 7z" : "M3 1.500v9l6-4.500z"} fill="#3a3a3a" stroke="#0e0e0e" /></svg>
    <div className={`text-[11.500px] font-bold whitespace-nowrap text-[#e0e0e0] ${cls}`}>{t}</div>
  </>
);

const VALUES: [string, string, string][] = [
  ["0", "bg-[#000004]", "0.0000"], ["25.49014", "bg-[#020109]", "25.4901"], ["50.98041", "bg-[#040312]", "50.9804"], ["76.47055", "bg-[#08061c]", "76.4706"],
];

const RAMPS: [string, string][] = [
  ["Blues", "bg-[linear-gradient(90deg,#f7fbff,#c6dbef_30%,#6baed6_60%,#2171b5_85%,#08306b)]"],
  ["Cividis", "bg-[linear-gradient(90deg,#00224e,#35456c_25%,#7d7c78_55%,#bbae6c_75%,#fee838)]"],
  ["Greens", "bg-[linear-gradient(90deg,#f7fcf5,#c7e9c0_30%,#74c476_60%,#238b45_85%,#00441b)]"],
  ["Greys", "bg-[linear-gradient(90deg,#ffffff,#bbbbbb_35%,#707070_65%,#111)]"],
  ["Magma", MAGMA_H],
  ["Mako", "bg-[linear-gradient(90deg,#0b0405,#3b2f5c_30%,#366a9f_55%,#41b5ab_80%,#def5e5)]"],
  ["RdGy", "bg-[linear-gradient(90deg,#ca0020,#f4a582_30%,#ffffff_55%,#bababa_75%,#404040)]"],
  ["Reds", "bg-[linear-gradient(90deg,#fff5f0,#fcbba1_30%,#fb6a4a_60%,#cb181d_85%,#67000d)]"],
  ["Rocket", "bg-[linear-gradient(90deg,#03051a,#5b1e51_30%,#cb1b50_55%,#f4845d_80%,#faebdd)]"],
  ["Spectral", "bg-[linear-gradient(90deg,#d7191c,#fdae61_25%,#ffffbf_50%,#abdda4_75%,#2b83ba)]"],
  ["Turbo", "bg-[linear-gradient(90deg,#30123b,#4686fb_18%,#1ae4b6_38%,#a4fc3c_55%,#fbb938_72%,#e3440a_88%,#7a0403)]"],
  ["Viridis", "bg-[linear-gradient(90deg,#440154,#3b528b_28%,#21918c_55%,#5ec962_78%,#fde725)]"],
];

const RampMenu = () => (
  <div className="absolute top-[444px] left-[1355px] h-[422px] w-[179px] border border-[#232323] bg-[#323232] text-[12px] tracking-[-0.25px] text-[#b1b1b1] shadow-[3px_3px_4px_rgba(0,0,0,0.6)]">
    <div className="flex h-[29px] items-center pt-[5px] pl-[32px]">Invert Color Ramp</div>
    <div className="mr-[9px] ml-[14px] h-px bg-[#545454]" />
    {RAMPS.map(([t, g]) => (
      <div key={t} className={t === "Magma" ? "ml-[4px] flex h-[24px] w-[169px] items-center bg-[#106b00] pl-[3px]" : "ml-[4px] flex h-[24px] w-[169px] items-center pl-[3px]"}>
        <div className={`h-4 w-4 ${g}`} /><span className="ml-[9px] pt-[4px]">{t}</span>
      </div>
    ))}
    <div className="mt-[2px] mr-[9px] ml-[14px] h-px bg-[#545454]" />
    <div className="flex h-[25px] items-center justify-between pt-px pr-[9px] pl-[32px]"><span>All Color Ramps</span><Tri d="right" s={5} /></div>
    <div className="mr-[9px] ml-[14px] h-px bg-[#545454]" />
    {["Create New Color Ramp...", "Edit Color Ramp...", "Save Color Ramp..."].map((t) => (
      <div key={t} className="flex h-[23px] items-center pt-[3px] pl-[32px] tracking-[-0.33px] whitespace-nowrap">{t}</div>
    ))}
  </div>
);

const RampRow = () => (
  <div className={`flex h-[22px] w-[525px] shrink-0 ${RAISED}`}>
    <div className={`mt-[3px] ml-[2px] h-[15px] w-[503px] ${MAGMA_H}`} />
    <div className="ml-px flex flex-1 items-center justify-center border-l border-[#202020]"><Tri s={5} c="#c4c4c4" /></div>
  </div>
);

const Row = ({ h = "h-[28px]", pl = "pl-[25px]", children }: { h?: string; pl?: string } & Kids) => (
  <div className={`flex shrink-0 items-center ${h} ${pl}`}>{children}</div>
);

const Form = () => (
  <div className="flex h-[692px] w-[829px] shrink-0 flex-col overflow-hidden text-[11px] tracking-[-0.15px] text-[#b1b1b1] [&_span]:pt-[2px]">
    <Row h="h-[32px]" pl="pl-[10px]"><Title t="Band Rendering" cls="ml-[5px] border border-[#a5661f] px-px leading-[11px] tracking-[-0.1px]" /></Row>
    <Row h="h-[32px]" pl="pl-[21px]"><span className="w-[71px] tracking-[0px]">Render type</span><Combo t="Singleband pseudocolor" w="w-[161px]" /></Row>
    <Row h="h-[32px]"><span className="w-[197px]">Band</span><Combo t="Band 1 (Gray)" w="w-[594px]" /></Row>
    <Row h="h-[24px]"><span className="w-[197px]">Min</span><Field t="0" w="w-[194px]" /><span className="ml-[9px] w-[197px]">Max</span><Field t="1300" w="w-[194px]" /></Row>
    <Row pl="pl-[24px]"><Title t="Min / Max Value Settings" open={false} cls="ml-[7px] pt-px tracking-[-0.05px]" /></Row>
    <Row><span className="w-[266px]">Interpolation</span><Combo t="Linear" w="w-[525px]" /></Row>
    <Row><span className="w-[266px]">Color ramp</span><RampRow /></Row>
    <Row><span className="w-[266px]">Label unit suffix</span><Field w="w-[525px]" /></Row>
    <Row><span className="w-[266px]">Label precision</span><Field w="w-[525px]"><div className="mr-[11px]"><ClearIcon /></div><Spin /></Field></Row>
    <div className="mt-[3px] ml-[22px] flex h-[191px] w-[794px] shrink-0 overflow-hidden border border-[#545454] bg-[#202020]">
      <div className="w-[781px] pt-[2px] pl-[2px]">
        <div className="mb-px flex h-[20px] items-center border-b border-[#545454] bg-[#323232]">
          <span className="flex h-full w-[100px] items-center border-r border-[#545454] pl-[4px]">Value</span>
          <span className="flex h-full w-[59px] items-center border-r border-[#545454] pl-[4px]">Color</span>
          <span className="pl-[4px]">Label</span>
        </div>
        {VALUES.map(([v, c, l]) => (
          <div key={v} className="flex h-[44px] items-center text-[12px] tracking-[-0.35px] text-[#e6e6e6]">
            <span className="w-[107px] pl-[22px]">{v}</span><div className={`h-[42px] w-[42px] rounded-[7px] ${c}`} /><span className="ml-[12px]">{l}</span>
          </div>
        ))}
      </div>
      <div className="h-[189px] w-[10px] bg-[#545454] px-px pt-px"><div className="h-[17px] bg-[#323232]" /></div>
    </div>
    <Row h="h-[36px]"><span className="w-[37px] tracking-[-0.3px]">Mode</span><Combo t="Continuous" w="w-[115px]" /><span className="ml-[522px] w-[47px]">Classes</span>
      <div className="flex h-[22px] w-[70px] items-center border border-[#545454] pl-[4px] text-[#555]"><span className="flex-1">5</span><Spin flat /></div>
    </Row>
    <Row h="h-[26px]" pl="pl-[22px]">
      <Btn t="Classify" w="w-[47px]" />
      <div className="ml-[6px] flex gap-[6px]">
        {["plus", "minus", "swap", "open", "saveStyle"].map((n) => <Btn key={n} w="w-[30px]" h="h-[26px]"><Icon n={n} s={16} /></Btn>)}
      </div>
      <div className="w-[471px]" /><Btn t="Legend Settings..." w="w-[96px]" />
    </Row>
    <Row h="h-[32px]" pl="pl-[22px]"><Check /><span className="ml-[5px] tracking-[-0.25px]">Clip out of range values</span></Row>
    <Row h="h-[42px]" pl="pl-[10px]"><Title t="Layer Rendering" cls="ml-[7px] pt-[3px] tracking-[-0.05px]" /></Row>
    <Row h="h-[26px]" pl="pl-[21px]"><span className="w-[80px]">Blending mode</span><Combo t="Normal" w="w-[328px]" h="h-[24px]" />
      <div className="w-[321px]" /><Btn t="Reset" w="w-[63px]" h="h-[26px]"><div className="mr-[4px]"><Icon n="reset" s={12} /></div></Btn>
    </Row>
    <Row h="h-[34px]" pl="pl-[21px]"><span className="w-[81px]">Brightness</span><Slider fill="w-[104px]" len="w-[234px]" />
      <div className="w-[7px]" /><Field t="0" w="w-[86px]"><Spin /></Field><span className="ml-[18px] w-[62px]">Contrast</span><Slider fill="w-[104px]" len="w-[234px]" /><div className="w-[7px]" /><Field t="0" w="w-[70px]"><Spin /></Field>
    </Row>
    <Row h="h-[22px]" pl="pl-[21px]"><span className="w-[81px]">Gamma</span><Slider fill="w-[19px]" len="w-[234px]" />
      <div className="w-[7px]" /><Field t="1.00" w="w-[86px]"><Spin /></Field><span className="ml-[18px] w-[62px]">Saturation</span><Slider fill="w-[104px]" len="w-[234px]" /><div className="w-[7px]" /><Field t="0" w="w-[70px]"><Spin /></Field>
    </Row>
    <Row h="h-[34px]" pl="pl-[18px]"><Check /><span className="ml-[5px] w-[406px]">Invert colors</span><span className="w-[61px]">Grayscale</span><Combo t="Off" w="w-[312px]" /></Row>
  </div>
);

const Dialog = () => (
  <div className="absolute top-[213px] left-[914px] h-[761px] w-[1000px] overflow-hidden rounded-lg border border-[#5a5a5a] bg-[#323232]">
    <div className="flex h-[29px] items-center bg-[linear-gradient(90deg,#fbf3e8_0%,#f3f4ec_20%,#e9f5f1_42%,#eaf4ef_50%,#faf0e7_65%,#faf0e7)] text-[12px] text-black">
      <svg width="16" height="16" viewBox="0 0 24 24" className="ml-[7px] shrink-0">
        <path d="M12 1a11 11 0 1 0 4 21l-4-5a5.500 5.500 0 1 1 5-5l5 5A11 11 0 0 0 12 1z" fill="#7fae33" /><path d="M12 12l11 11h-6l-6-6z" fill="#589632" /><path d="M11 11h5l-1 4z" fill="#ee7913" />
      </svg>
      <span className="ml-[5px] w-[948px] shrink-0 tracking-[-0.24px]">Layer Properties - Clipped (mask) — Symbology</span>
      <svg width="10" height="10" viewBox="0 0 10 10" className="shrink-0"><path d="M.5.500l9 9M9.500.500l-9 9" stroke="#222" strokeWidth="1.200" /></svg>
    </div>
    <div className="flex">
      <div className="ml-px w-[148px] shrink-0 pt-[2px]">
        <div className="flex h-[22px] items-center border border-[#545454] bg-[#202020] pl-[7px]"><Icon n="search" s={13} /></div>
        <div className="mt-[6px] h-[698px] border border-[#545454] bg-[#202020] p-px">
          {PAGES.map(([ic, t]) => (
            <div key={t} className={t === "Symbology" ? "flex h-[34px] items-center bg-[#106b00] pl-[6px] text-[#e6e6e6]" : "flex h-[34px] items-center pl-[6px] text-[#b1b1b1]"}>
              <Icon n={ic} s={26} /><span className="ml-[7px] pt-[3px] text-[12px] tracking-[-0.25px] whitespace-nowrap">{t}</span>
            </div>
          ))}
        </div>
      </div>
      <div className="w-[841px] shrink-0">
        <div className="flex">
          <Form />
          <div className="mt-[8px] ml-px h-[684px] w-[10px] shrink-0 bg-[#545454] p-px"><div className="h-[604px] bg-[#323232]" /></div>
        </div>
        <div className="mt-[9px] flex text-[11px] tracking-[-0.1px] [&_span]:pt-[2px]">
          <div className="w-[7px]" />
          <Btn w="w-[46px]"><span className="flex-1 pl-[4px]">Style</span><div className="mt-2 mr-[3px]"><Tri s={6} c="#999" /></div></Btn>
          <div className="w-[636px] shrink-0" />
          <div className="flex gap-[6px]"><Btn t="OK" w="w-[24px]" /><Btn t="Cancel" w="w-[42px]" /><Btn t="Apply" w="w-[37px]" /><Btn t="Help" w="w-[31px]" /></div>
        </div>
      </div>
    </div>
    <div className="absolute top-[387px] left-[152px] h-[17px] w-[2px] bg-[repeating-linear-gradient(#999_0_2px,#323232_2px_4px)]" />
  </div>
);

export default function App() {
  return (
    <div className="relative h-[991px] w-[1905px] overflow-hidden bg-[#323232] font-['Open_Sans',sans-serif] leading-[16px]">
      <div className="flex h-[18px] items-center gap-[13.800px] pl-[8px] text-[12px] tracking-[-0.36px] text-[#b8b8b8]">
        {MENUS.map(([a, b, c], i) => <span key={i}>{a}<span className="underline">{b}</span>{c}</span>)}
      </div>
      <div className="flex h-[39px] items-center"><div className="ml-[2px] h-[14px] w-px shrink-0 bg-[#5c5c5c]" /><Tools row={ROW1} /></div>
      <div className="flex h-[39px] items-center"><div className="ml-[2px] h-[14px] w-px shrink-0 bg-[#5c5c5c]" /><Tools row={ROW2} /></div>
      <div className="flex h-[863px]">
        <div className="w-[414px] shrink-0"><Browser /><Layers /></div>
        <div className="ml-[6px] w-[1089px] shrink-0"><MessageBar /><MapCanvas /></div>
        <Toolbox />
        <div className="w-[5px] shrink-0" />
      </div>
      <StatusBar />
      <div className="h-[2px] bg-[#0c0a10]" />
      <div className="absolute top-0 right-0 h-[213px] w-[5px] bg-[#6f6158]">
        <div className="mt-[127px] h-[30px] w-[4px] rounded-r bg-[#1c1c1c]" /><div className="mt-[5px] h-[30px] w-[4px] rounded-r bg-[#1c1c1c]" />
      </div>
      {/* The dialog's drop shadow darkens what lies left of it and below it. */}
      <div className="absolute top-[213px] left-[914px] h-[761px] w-[1000px] rounded-lg shadow-[0_6px_28px_rgba(0,0,0,0.45)]" />
      <Dialog />
      <RampMenu />
    </div>
  );
}
